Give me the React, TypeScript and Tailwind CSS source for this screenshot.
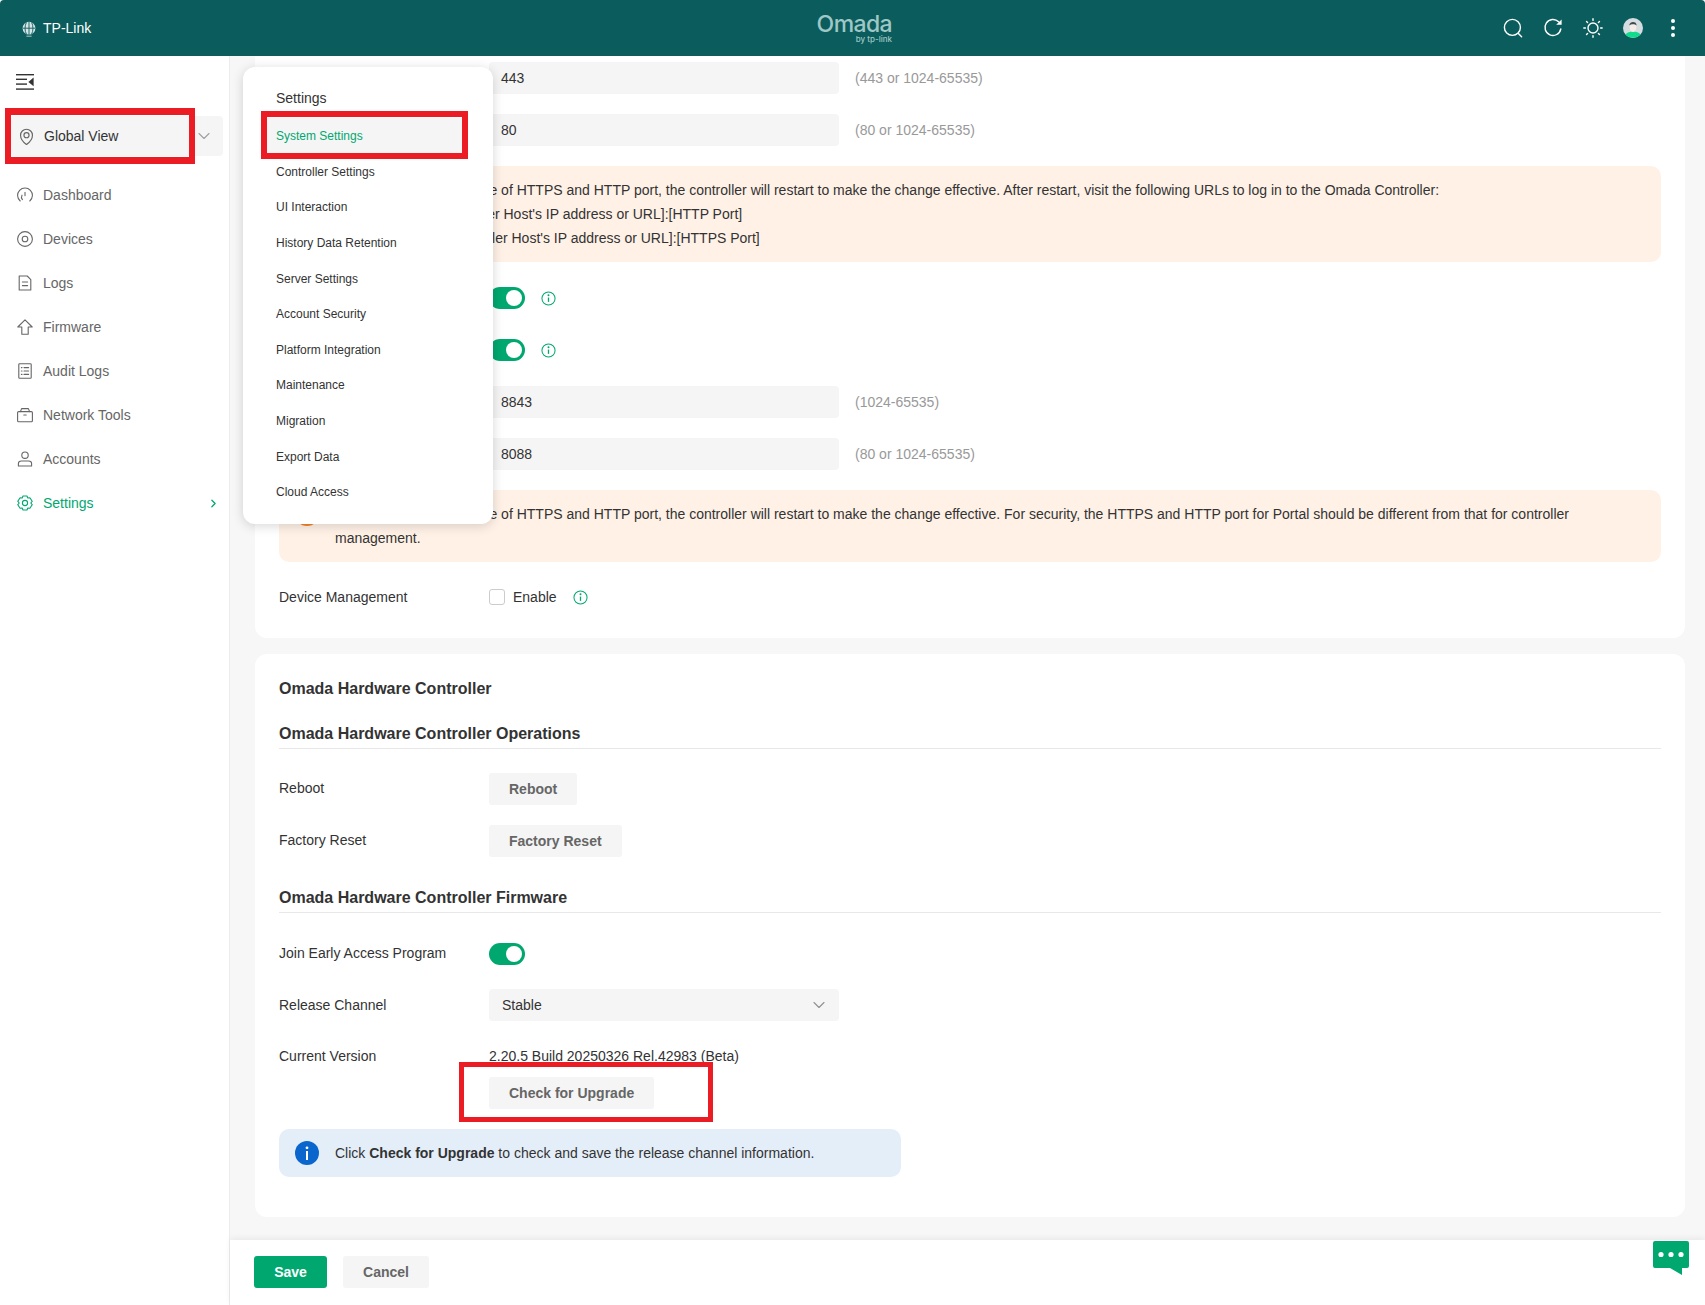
import React from "react";
import { ChevronDown, ChevronRight } from "lucide-react";

type IconProps = { className?: string };

const Svg: React.FC<IconProps & { children: React.ReactNode }> = ({ className, children }) => (
  <svg
    viewBox="0 0 16 16"
    fill="none"
    stroke="currentColor"
    strokeWidth="1.1"
    strokeLinecap="round"
    strokeLinejoin="round"
    className={className}
  >
    {children}
  </svg>
);

const DashboardIcon = (p: IconProps) => (
  <Svg {...p}>
    <path d="M3.2 14A7.4 7.4 0 1 1 12.8 14" />
    <path d="M5.4 12.6A4 4 0 0 1 5 8.2" />
    <path d="M8 8.6V5.6" />
  </Svg>
);
const DevicesIcon = (p: IconProps) => (
  <Svg {...p}>
    <circle cx="8" cy="8" r="7.4" />
    <circle cx="8" cy="8" r="2.8" />
  </Svg>
);
const LogsIcon = (p: IconProps) => (
  <Svg {...p}>
    <path d="M2.2 1H10.2L13.8 4.6V15H2.2Z" />
    <path d="M5.4 7H10.6M5.4 10.6H10.6" />
  </Svg>
);
const FirmwareIcon = (p: IconProps) => (
  <Svg {...p}>
    <path d="M8 0.8L15.2 8H11.2V15.2H4.8V8H0.8Z" />
  </Svg>
);
const AuditIcon = (p: IconProps) => (
  <Svg {...p}>
    <rect x="1.8" y="0.8" width="12.4" height="14.4" rx="0.8" />
    <path d="M4.4 4.6H5M7 4.6H11.6M4.4 8H5M7 8H11.6M4.4 11.4H5M7 11.4H11.6" />
  </Svg>
);
const ToolsIcon = (p: IconProps) => (
  <Svg {...p}>
    <rect x="0.6" y="4.6" width="14.8" height="10.2" rx="1" />
    <path d="M3.4 4.6L4.6 1.6H11.4L12.6 4.6M6.8 8H9.2" />
  </Svg>
);
const UserIcon = (p: IconProps) => (
  <Svg {...p}>
    <circle cx="8" cy="4.2" r="3.2" />
    <path d="M1.4 15V12.4C1.4 11 2.8 10 4.4 10H11.6C13.2 10 14.6 11 14.6 12.4V15Z" />
  </Svg>
);
const GearIcon = (p: IconProps) => (
  <Svg {...p}>
    <path d="M6 1H10L10.8 3L12.9 2.8L15.2 6.3L13.8 8L15.2 9.7L12.9 13.2L10.8 13L10 15H6L5.2 13L3.1 13.2L0.8 9.7L2.2 8L0.8 6.3L3.1 2.8L5.2 3Z" />
    <circle cx="8" cy="8" r="2.6" />
  </Svg>
);
const PinIcon = (p: IconProps) => (
  <Svg {...p}>
    <path d="M8 15.6C5 13.4 2.4 10.8 2.4 6.8A5.6 5.6 0 0 1 13.6 6.8C13.6 10.8 11 13.4 8 15.6Z" />
    <circle cx="8" cy="6.8" r="2.4" />
  </Svg>
);

const InfoOutline: React.FC = () => (
  <svg viewBox="0 0 16 16" fill="none" stroke="#00a870" strokeWidth="1.1" className="size-[15px]">
    <circle cx="8" cy="8" r="7" />
    <path d="M8 7V11.6" strokeWidth="1.4" />
    <circle cx="8" cy="4.6" r="0.5" fill="#00a870" />
  </svg>
);

const navItems = [
  { label: "Dashboard", Icon: DashboardIcon },
  { label: "Devices", Icon: DevicesIcon },
  { label: "Logs", Icon: LogsIcon },
  { label: "Firmware", Icon: FirmwareIcon },
  { label: "Audit Logs", Icon: AuditIcon },
  { label: "Network Tools", Icon: ToolsIcon },
  { label: "Accounts", Icon: UserIcon },
];

const menuItems = [
  "Controller Settings",
  "UI Interaction",
  "History Data Retention",
  "Server Settings",
  "Account Security",
  "Platform Integration",
  "Maintenance",
  "Migration",
  "Export Data",
  "Cloud Access",
];

const Header: React.FC = () => (
  <header className="relative flex h-14 shrink-0 items-center rounded-t-[4px] bg-[#0b5c5c] pl-[21px] pr-3 text-white">
    <svg viewBox="0 0 16 16" className="mt-px size-4 text-[#d6e6e6]" fill="none" stroke="currentColor" strokeWidth="1.2">
      <circle cx="8" cy="7.2" r="6.4" fill="currentColor" stroke="none" />
      <path d="M8 0.8V13.6M1.6 7.2H14.4M5.4 1.4C3.6 5 3.6 10 5.4 13M10.6 1.4C12.4 5 12.4 10 10.6 13" stroke="#0b5c5c" strokeWidth="0.9" />
      <path d="M5.4 15.2H10.6" strokeWidth="0.8" />
    </svg>
    <span className="ml-[6px] text-sm">TP-Link</span>
    <div className="absolute left-[816px] top-[13px] flex w-[76px] flex-col items-end text-[#9fc7c5]">
      <span className="font-['Inter',sans-serif] text-[23px] font-medium leading-[22px] tracking-[-0.6px]">Omada</span>
      <span className="font-['Inter',sans-serif] text-[8px] font-medium leading-[9px]">by tp-link</span>
    </div>
    <div className="ml-auto flex items-center">
      <div className="flex w-10 justify-center">
        <svg viewBox="0 0 20 20" fill="none" stroke="currentColor" strokeWidth="1.4" strokeLinecap="round" className="size-5">
          <circle cx="9.4" cy="9.4" r="8" />
          <path d="M15.4 15.4L18.6 18.8" />
        </svg>
      </div>
      <div className="flex w-10 justify-center">
        <svg viewBox="0 0 20 20" fill="none" stroke="currentColor" strokeWidth="1.4" strokeLinecap="round" className="size-5">
          <path d="M17.8 11A8 8 0 1 1 15.6 3.8" />
          <path d="M18.6 1.4V6.8H13.2Z" fill="currentColor" stroke="none" />
        </svg>
      </div>
      <div className="flex w-10 justify-center">
        <svg viewBox="0 0 20 20" fill="none" stroke="currentColor" strokeWidth="1.4" strokeLinecap="round" className="size-5">
          <circle cx="10" cy="10" r="5" />
          <path d="M10 .8V2.4M10 17.6V19.2M.8 10H2.4M17.6 10H19.2M3.5 3.5L4.6 4.6M15.4 15.4L16.5 16.5M3.5 16.5L4.6 15.4M15.4 4.6L16.5 3.5" />
        </svg>
      </div>
      <div className="flex w-10 justify-center">
        <svg viewBox="0 0 20 20" className="size-5">
          <circle cx="10" cy="10" r="10" fill="#d5dde0" />
          <path d="M2.6 16.6C4 14.2 7 13.8 10 13.8S16 14.2 17.4 16.6A10 10 0 0 1 2.6 16.6Z" fill="#0fdc8c" />
          <ellipse cx="10" cy="9" rx="3.4" ry="5" fill="#f5ece8" />
          <path d="M6.4 7.4C6 3 13.8 2.6 13.6 7.4C12 5.8 8 5.8 6.4 7.4Z" fill="#3b4a52" />
        </svg>
      </div>
      <div className="flex w-10 flex-col items-center gap-[3.5px]">
        <div className="size-[3.5px] rounded-full bg-white" />
        <div className="size-[3.5px] rounded-full bg-white" />
        <div className="size-[3.5px] rounded-full bg-white" />
      </div>
    </div>
  </header>
);

const Sidebar: React.FC = () => (
  <aside className="flex w-[230px] shrink-0 flex-col border-r border-[#ececec] bg-white">
    <div className="flex h-[52px] items-center pl-4">
      <svg viewBox="0 0 18 16" className="h-4 w-[18px] text-[#333333]" fill="currentColor">
        <rect x="0" y="0" width="18" height="1.4" />
        <rect x="0" y="4.6" width="11" height="1.4" />
        <rect x="0" y="9.4" width="11" height="1.4" />
        <rect x="0" y="14.4" width="18" height="1.4" />
        <path d="M17.6 3.6V12.2L12.4 7.9Z" />
      </svg>
    </div>
    <div className="ml-[11px] mt-2 flex h-10 w-[212px] items-center rounded-[4px] bg-[#f5f5f5] pl-[7px] text-sm text-[#333333]">
      <PinIcon className="size-[17px] text-[#666666]" />
      <span className="ml-[9px]">Global View</span>
      <ChevronDown className="ml-auto mr-[9px] size-5 text-[#a0a0a0]" strokeWidth={1.3} />
    </div>
    <nav className="mt-[17px] flex flex-col text-sm">
      {navItems.map(({ label, Icon }) => (
        <div key={label} className="flex h-11 items-center pl-[17px] text-[#666666]">
          <Icon className="size-4" />
          <span className="ml-[10px]">{label}</span>
        </div>
      ))}
      <div className="flex h-11 items-center pl-[17px] text-[#00a870]">
        <GearIcon className="size-4" />
        <span className="ml-[10px]">Settings</span>
        <ChevronRight className="ml-auto mr-[9px] size-[13px]" strokeWidth={2.4} />
      </div>
    </nav>
  </aside>
);

const Label: React.FC<{ text: string; raised?: boolean }> = ({ text, raised }) => (
  <div className={`w-[210px] shrink-0 whitespace-nowrap text-sm text-[#333333] ${raised ? "mb-[2px]" : ""}`}>{text}</div>
);

const FieldRow: React.FC<{ label: string; value: string; hint: string }> = ({ label, value, hint }) => (
  <div className="mb-5 flex h-8 items-center">
    <Label text={label} />
    <div className="flex h-8 w-[350px] items-center rounded-[4px] bg-[#f5f5f5] pl-3 text-sm text-[#333333]">{value}</div>
    <span className="ml-4 text-sm text-[#999999]">{hint}</span>
  </div>
);

const Toggle: React.FC = () => (
  <div className="flex h-[22px] w-9 items-center justify-end rounded-full bg-[#00a870] pr-[3px]">
    <div className="size-4 rounded-full bg-white" />
  </div>
);

const ToggleRow: React.FC<{ label: string }> = ({ label }) => (
  <div className="mb-5 flex h-8 items-center">
    <Label text={label} />
    <Toggle />
    <div className="ml-4">
      <InfoOutline />
    </div>
  </div>
);

const Warning: React.FC<{ children: React.ReactNode }> = ({ children }) => (
  <div className="mb-5 flex rounded-[10px] bg-[#fff1e6] py-3 pl-4 pr-4 text-sm leading-6 text-[#333333]">
    <div className="mr-4 flex size-6 shrink-0 items-center justify-center rounded-full bg-[#f5822a] font-bold text-white">!</div>
    <div>{children}</div>
  </div>
);

const GrayButton: React.FC<{ children: React.ReactNode }> = ({ children }) => (
  <button className="h-8 rounded-[3px] bg-[#f5f5f5] px-5 text-sm font-bold text-[#666666]">{children}</button>
);

const SectionHead: React.FC<{ text: string; className?: string }> = ({ text, className }) => (
  <div className={`border-b border-[#e8e8e8] pb-[2px] text-base font-bold leading-6 text-[#333333] ${className ?? ""}`}>{text}</div>
);

const SettingsCards: React.FC = () => (
  <div className="flex-1 overflow-hidden pl-[25px] pr-5">
    <section className="rounded-b-[12px] bg-white pb-[25px] pl-6 pr-6 pt-[6px]">
      <FieldRow label="HTTPS Port for Controller" value="443" hint="(443 or 1024-65535)" />
      <FieldRow label="HTTP Port for Controller" value="80" hint="(80 or 1024-65535)" />
      <Warning>
        <p className="indent-[-2px]">
          If you do change the value of HTTPS and HTTP port, the controller will restart to make the change effective. After restart, visit the following URLs to log in to the Omada Controller:
        </p>
        <p className="pl-[65px]">http://[Controller Host's IP address or URL]:[HTTP Port]</p>
        <p className="pl-[66px]">https://[Controller Host's IP address or URL]:[HTTPS Port]</p>
      </Warning>
      <ToggleRow label="HTTPS Redirection" />
      <ToggleRow label="HTTP Redirection" />
      <FieldRow label="HTTPS Port for Portal" value="8843" hint="(1024-65535)" />
      <FieldRow label="HTTP Port for Portal" value="8088" hint="(80 or 1024-65535)" />
      <Warning>
        <p className="indent-[-2px]">
          If you do change the value of HTTPS and HTTP port, the controller will restart to make the change effective. For security, the HTTPS and HTTP port for Portal should be different from that for controller management.
        </p>
      </Warning>
      <div className="-mt-px flex h-8 items-center">
        <Label text="Device Management" />
        <div className="size-4 rounded-[3px] border border-[#cccccc] bg-white" />
        <span className="ml-2 text-sm text-[#333333]">Enable</span>
        <div className="ml-4">
          <InfoOutline />
        </div>
      </div>
    </section>

    <section className="mt-4 rounded-[12px] bg-white pb-10 pl-6 pr-6 pt-[23px]">
      <div className="text-base font-bold leading-6 text-[#333333]">Omada Hardware Controller</div>
      <SectionHead text="Omada Hardware Controller Operations" className="mb-6 mt-[21px]" />
      <div className="mb-5 flex h-8 items-center">
        <Label text="Reboot" raised />
        <GrayButton>Reboot</GrayButton>
      </div>
      <div className="flex h-8 items-center">
        <Label text="Factory Reset" raised />
        <GrayButton>Factory Reset</GrayButton>
      </div>
      <SectionHead text="Omada Hardware Controller Firmware" className="mb-[25px] mt-[29px]" />
      <div className="mb-[19px] flex h-8 items-center">
        <Label text="Join Early Access Program" raised />
        <Toggle />
      </div>
      <div className="mb-[23px] flex h-8 items-center">
        <Label text="Release Channel" />
        <div className="flex h-8 w-[350px] items-center justify-between rounded-[4px] bg-[#f5f5f5] pl-[13px] pr-[10px] text-sm text-[#333333]">
          Stable
          <ChevronDown className="size-5 text-[#909090]" strokeWidth={1.3} />
        </div>
      </div>
      <div className="flex">
        <div className="pt-[2px] leading-6">
          <Label text="Current Version" />
        </div>
        <div>
          <div className="text-sm leading-6 text-[#333333]">2.20.5 Build 20250326 Rel.42983 (Beta)</div>
          <div className="mt-[9px]">
            <GrayButton>Check for Upgrade</GrayButton>
          </div>
        </div>
      </div>
      <div className="mt-5 flex h-12 w-[622px] items-center rounded-[10px] bg-[#e4eef9] pl-4 text-sm text-[#333333]">
        <svg viewBox="0 0 24 24" className="mr-4 size-6 shrink-0">
          <circle cx="12" cy="12" r="12" fill="#0a66cc" />
          <rect x="11" y="10" width="2" height="9" fill="#ffffff" />
          <circle cx="12" cy="6.8" r="1.4" fill="#ffffff" />
        </svg>
        <span>
          Click <b>Check for Upgrade</b> to check and save the release channel information.
        </span>
      </div>
    </section>
  </div>
);

const Footer: React.FC = () => (
  <footer className="flex h-[65px] shrink-0 items-start gap-4 bg-white pl-6 pt-4 shadow-[0_-2px_6px_rgba(0,0,0,0.06)]">
    <button className="h-8 w-[73px] rounded-[3px] bg-[#00a870] text-sm font-bold text-white">Save</button>
    <button className="h-8 w-[86px] rounded-[3px] bg-[#f5f5f5] text-sm font-bold text-[#666666]">Cancel</button>
  </footer>
);

export default function App() {
  return (
    <div className="relative flex h-[1305px] w-[1705px] flex-col overflow-hidden bg-white font-['Liberation_Sans',Arial,sans-serif]">
      <Header />
      <div className="flex min-h-0 flex-1">
        <Sidebar />
        <main className="flex min-w-0 flex-1 flex-col bg-[#f7f7f7]">
          <SettingsCards />
          <Footer />
        </main>
      </div>

      {/* settings flyout */}
      <div className="absolute left-[243px] top-[67px] h-[457px] w-[250px] rounded-[12px] bg-white pt-[19px] shadow-[0_2px_12px_rgba(0,0,0,0.16)]">
        <div className="pl-[33px] text-sm leading-6 text-[#333333]">Settings</div>
        <div className="ml-6 mr-[31px] mt-[8px] flex h-9 items-center bg-[#f5f5f5] pl-[9px] text-xs text-[#00a870]">System Settings</div>
        <div className="flex flex-col">
          {menuItems.map((item) => (
            <div key={item} className="flex h-[35.6px] items-center pl-[33px] text-xs text-[#333333]">
              {item}
            </div>
          ))}
        </div>
      </div>

      {/* annotation boxes */}
      <div className="absolute left-[5px] top-[108px] h-[56px] w-[190px] border-x-[6px] border-y-[7px] border-[#ec1c24]" />
      <div className="absolute left-[261px] top-[111px] h-[48px] w-[207px] border-[6px] border-[#ec1c24]" />
      <div className="absolute left-[459px] top-[1062px] h-[60px] w-[254px] border-[5px] border-[#ec1c24]" />

      <svg viewBox="0 0 36 34" className="absolute left-[1653px] top-[1241px] h-[34px] w-9">
        <path d="M2 0H34A2 2 0 0 1 36 2V25A2 2 0 0 1 34 27H29V34L17 27H2A2 2 0 0 1 0 25V2A2 2 0 0 1 2 0Z" fill="#00a870" />
        <circle cx="8" cy="13.5" r="2.6" fill="#fff" />
        <circle cx="18" cy="13.5" r="2.6" fill="#fff" />
        <circle cx="28" cy="13.5" r="2.6" fill="#fff" />
      </svg>
    </div>
  );
}
